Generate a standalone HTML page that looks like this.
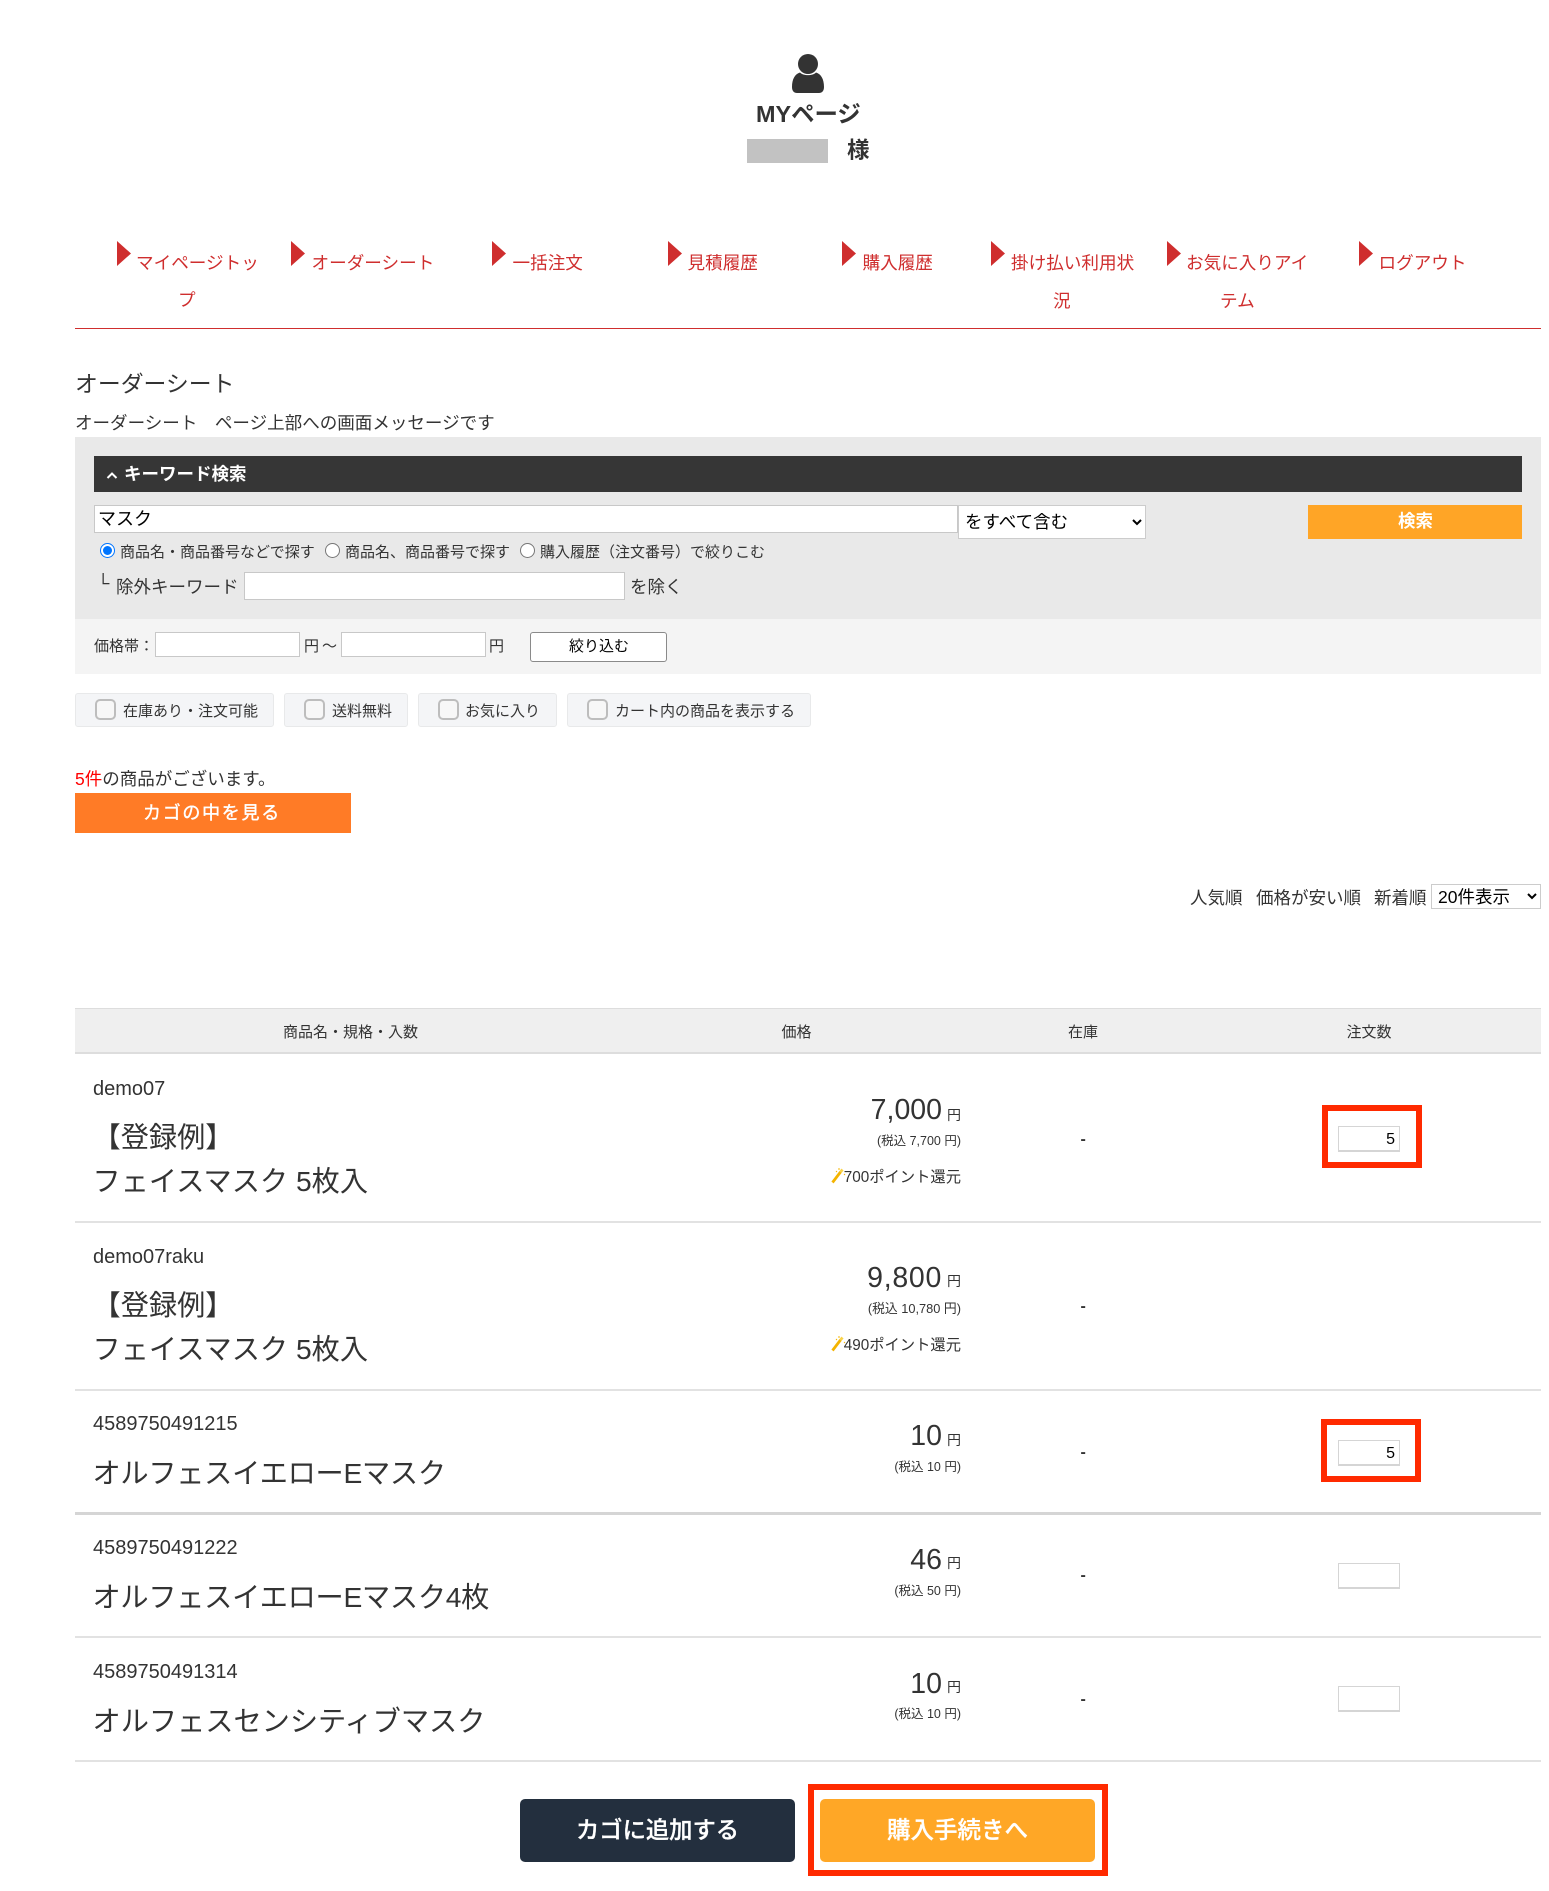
<!DOCTYPE html>
<html lang="ja"><head><meta charset="utf-8"><title>オーダーシート</title>
<style>
html,body{margin:0;padding:0;background:#fff}
body{position:relative;width:1549px;height:1891px;overflow:hidden;font-family:"Liberation Sans","Noto Sans CJK JP",sans-serif;color:#333}
.t{position:absolute;white-space:nowrap;line-height:1;font-size:17.5px}
.b{position:absolute;box-sizing:border-box}
.nav{color:#cf2e2e;font-size:17.6px}
.s15{font-size:15px}
input.i{position:absolute;box-sizing:border-box;background:#fff;border:1px solid #c8c8c8;margin:0;padding:0 4px;font-family:inherit;outline:0}
input.r{position:absolute;margin:0;width:15px;height:15px}
select{position:absolute;box-sizing:border-box;background:#fff;border:1px solid #ccc;border-radius:0;margin:0;font-family:inherit;font-size:17.5px;color:#000;padding:0 0 0 2px}
.pill{position:absolute;box-sizing:border-box;top:693px;height:34px;background:#f4f5f7;border:1px solid #e8e9ea;border-radius:3px}
.cb{position:absolute;box-sizing:border-box;top:699px;width:21px;height:21px;background:#f7f7f7;border:2px solid #bdbdbd;border-radius:5px}
.line{position:absolute;left:75px;width:1466px;height:2px;background:#e2e2e2}
.name{font-size:28.2px;left:92.500px}
.code{font-size:20px;left:93px}
.price{font-size:28.5px;right:607px}
.yen{font-size:14px;right:588px}
.tax{font-size:12.5px;right:588px}
.pt{font-size:15.3px;right:588px}
.dash{left:1080.500px;font-size:16px;font-weight:700}
.qty{position:absolute;box-sizing:border-box;left:1338px;width:62px;height:26px;background:#fff;border:1px solid #d5d5d5;border-bottom-width:2px;text-align:right;padding:3px 4px 0;margin:0;font:16px "Liberation Sans",sans-serif;color:#000}
.red{position:absolute;box-sizing:border-box;border:6px solid #ff2a00}
</style></head><body>

<svg class="b" style="left:790px;top:52px" width="36" height="43" viewBox="790 52 36 43"><circle cx="808" cy="64" r="10" fill="#333"/><path d="M800 72.500C803 76 813 76 816 72.500C821 74 824 79 824 87C824 91 822 93 819 93L797 93C794 93 792 91 792 87C792 79 795 74 800 72.500Z" fill="#333"/></svg>
<div class="t" style="left:756px;top:103px;font-size:23.400px;font-weight:700">MYページ</div>
<div class="b" style="left:747px;top:139px;width:81px;height:24px;background:#c2c2c2"></div>
<div class="t" style="left:847px;top:140px;font-size:22.500px;font-weight:700">様</div>

<svg class="b" style="left:116px;top:241px" width="17" height="26"><polygon points="1,0 15,12.500 1,25" fill="#cf2e2e"/></svg>
<svg class="b" style="left:290px;top:241px" width="17" height="26"><polygon points="1,0 15,12.500 1,25" fill="#cf2e2e"/></svg>
<svg class="b" style="left:491px;top:241px" width="17" height="26"><polygon points="1,0 15,12.500 1,25" fill="#cf2e2e"/></svg>
<svg class="b" style="left:666.500px;top:241px" width="17" height="26"><polygon points="1,0 15,12.500 1,25" fill="#cf2e2e"/></svg>
<svg class="b" style="left:841px;top:241px" width="17" height="26"><polygon points="1,0 15,12.500 1,25" fill="#cf2e2e"/></svg>
<svg class="b" style="left:990px;top:241px" width="17" height="26"><polygon points="1,0 15,12.500 1,25" fill="#cf2e2e"/></svg>
<svg class="b" style="left:1165.500px;top:241px" width="17" height="26"><polygon points="1,0 15,12.500 1,25" fill="#cf2e2e"/></svg>
<svg class="b" style="left:1358px;top:241px" width="17" height="26"><polygon points="1,0 15,12.500 1,25" fill="#cf2e2e"/></svg>
<div class="t nav" style="left:136px;top:255px">マイページトッ</div>
<div class="t nav" style="left:178px;top:292px">プ</div>
<div class="t nav" style="left:311.500px;top:255px">オーダーシート</div>
<div class="t nav" style="left:512.500px;top:255px">一括注文</div>
<div class="t nav" style="left:687.500px;top:255px">見積履歴</div>
<div class="t nav" style="left:862.500px;top:255px">購入履歴</div>
<div class="t nav" style="left:1011px;top:255px">掛け払い利用状</div>
<div class="t nav" style="left:1053px;top:293px">況</div>
<div class="t nav" style="left:1186px;top:255px">お気に入りアイ</div>
<div class="t nav" style="left:1220px;top:293px">テム</div>
<div class="t nav" style="left:1378.500px;top:255px">ログアウト</div>
<div class="b" style="left:75px;top:328px;width:1466px;height:1px;background:#cf2e2e"></div>

<div class="t" style="left:75px;top:373px;font-size:22.850px">オーダーシート</div>
<div class="t" style="left:75px;top:415px;font-size:17.550px">オーダーシート　ページ上部への画面メッセージです</div>

<div class="b" style="left:75px;top:437px;width:1466px;height:182px;background:#e9e9e9"></div>
<div class="b" style="left:75px;top:619px;width:1466px;height:55px;background:#f4f4f4"></div>
<div class="b" style="left:94px;top:456px;width:1428px;height:36px;background:#363636"></div>
<svg class="b" style="left:106px;top:471px" width="12" height="9"><path d="M1.500 7L6 2.500L10.500 7" fill="none" stroke="#fff" stroke-width="2"/></svg>
<div class="t" style="left:124px;top:466px;color:#fff;font-weight:700;font-size:17.500px">キーワード検索</div>

<input class="i" style="left:94px;top:505px;width:864px;height:28px;font-size:18px;color:#000;padding:0 0 3px 3px" value="マスク">
<select style="left:958px;top:505px;width:188px;height:34px"><option>をすべて含む</option></select>
<div class="b" style="left:1308px;top:505px;width:214px;height:34px;background:#ffa526"></div>
<div class="t" style="left:1398px;top:513px;color:#fff;font-weight:700">検索</div>

<input class="r" type="radio" name="k" checked style="left:100px;top:543px">
<div class="t s15" style="left:120px;top:545px">商品名・商品番号などで探す</div>
<input class="r" type="radio" name="k" style="left:325px;top:543px">
<div class="t s15" style="left:345px;top:545px">商品名、商品番号で探す</div>
<input class="r" type="radio" name="k" style="left:520px;top:543px">
<div class="t s15" style="left:540px;top:545px">購入履歴（注文番号）で絞りこむ</div>
<div class="t" style="left:97px;top:575px">└</div>
<div class="t" style="left:116px;top:579px">除外キーワード</div>
<input class="i" style="left:243.500px;top:572px;width:381px;height:28px">
<div class="t" style="left:630px;top:579px">を除く</div>

<div class="t s15" style="left:94px;top:639px">価格帯：</div>
<input class="i" style="left:154.500px;top:632px;width:145px;height:25px">
<div class="t s15" style="left:304px;top:639px">円</div>
<div class="t s15" style="left:322px;top:639px">～</div>
<input class="i" style="left:341px;top:632px;width:145px;height:25px">
<div class="t s15" style="left:489px;top:639px">円</div>
<div class="b" style="left:530px;top:632px;width:137px;height:30px;background:#fff;border:1px solid #8a8a8a;border-radius:3px"></div>
<div class="t s15" style="left:569px;top:639px;color:#000">絞り込む</div>

<div class="pill" style="left:75px;width:199px"></div>
<div class="pill" style="left:284px;width:124px"></div>
<div class="pill" style="left:418px;width:139px"></div>
<div class="pill" style="left:567px;width:244px"></div>
<div class="cb" style="left:95px"></div><div class="t s15" style="left:123px;top:704px">在庫あり・注文可能</div>
<div class="cb" style="left:304px"></div><div class="t s15" style="left:332px;top:704px">送料無料</div>
<div class="cb" style="left:438px"></div><div class="t s15" style="left:465px;top:704px">お気に入り</div>
<div class="cb" style="left:587px"></div><div class="t s15" style="left:615px;top:704px">カート内の商品を表示する</div>

<div class="t" style="left:75px;top:771px"><span style="color:#f00">5件</span>の商品がございます。</div>
<div class="b" style="left:75px;top:793px;width:276px;height:40px;background:#ff7b26"></div>
<div class="t" style="left:143px;top:804px;color:#fff;font-size:18px;letter-spacing:1.700px;-webkit-text-stroke:.4px #fff">カゴの中を見る</div>

<div class="t" style="left:1190px;top:889.500px">人気順</div>
<div class="t" style="left:1256px;top:889.500px">価格が安い順</div>
<div class="t" style="left:1374px;top:889.500px">新着順</div>
<select style="left:1431px;top:884px;width:110px;height:25px"><option>20件表示</option></select>

<div class="b" style="left:75px;top:1008px;width:1466px;height:46px;background:#efefef;border-top:1px solid #ddd;border-bottom:2px solid #ddd"></div>
<div class="t s15" style="left:283px;top:1024.500px">商品名・規格・入数</div>
<div class="t s15" style="left:781.500px;top:1024.500px">価格</div>
<div class="t s15" style="left:1068px;top:1024.500px">在庫</div>
<div class="t s15" style="left:1346.500px;top:1024.500px">注文数</div>

<div class="t code" style="top:1079px">demo07</div>
<div class="t name" style="top:1123px">【登録例】</div>
<div class="t name" style="top:1167px">フェイスマスク 5枚入</div>
<div class="t price" style="top:1096px">7,000</div><div class="t yen" style="top:1108px">円</div>
<div class="t tax" style="top:1135px">(税込 7,700 円)</div>
<svg class="b" style="left:830px;top:1167px" width="16" height="17"><path d="M2.500 15.500L10.500 5" stroke="#f4b400" stroke-width="2.800"/><path d="M10.500 5L12.500 2.500" stroke="#f9d34a" stroke-width="2.800"/><path d="M6 4l1 1M9 1v2M14 7l1 1" stroke="#f4b400" stroke-width="1"/></svg>
<div class="t pt" style="top:1170px">700ポイント還元</div>
<div class="t dash" style="top:1132px">-</div>
<div class="red" style="left:1322px;top:1105px;width:100px;height:63px"></div>
<input class="qty" style="top:1126px" value="5">
<div class="line" style="top:1221px"></div>

<div class="t code" style="top:1247px">demo07raku</div>
<div class="t name" style="top:1291px">【登録例】</div>
<div class="t name" style="top:1335px">フェイスマスク 5枚入</div>
<div class="t price" style="top:1264px;letter-spacing:.7px">9,800</div><div class="t yen" style="top:1274px">円</div>
<div class="t tax" style="top:1303px;font-size:12.800px">(税込 10,780 円)</div>
<svg class="b" style="left:830px;top:1335px" width="16" height="17"><path d="M2.500 15.500L10.500 5" stroke="#f4b400" stroke-width="2.800"/><path d="M10.500 5L12.500 2.500" stroke="#f9d34a" stroke-width="2.800"/><path d="M6 4l1 1M9 1v2M14 7l1 1" stroke="#f4b400" stroke-width="1"/></svg>
<div class="t pt" style="top:1338px">490ポイント還元</div>
<div class="t dash" style="top:1299px">-</div>
<div class="line" style="top:1389px"></div>

<div class="t code" style="top:1414px">4589750491215</div>
<div class="t name" style="top:1459px;letter-spacing:-.27px">オルフェスイエローEマスク</div>
<div class="t price" style="top:1421.500px">10</div><div class="t yen" style="top:1432.500px">円</div>
<div class="t tax" style="top:1460.500px">(税込 10 円)</div>
<div class="t dash" style="top:1445px">-</div>
<div class="red" style="left:1321px;top:1419px;width:100px;height:63px"></div>
<input class="qty" style="top:1440px" value="5">
<div class="line" style="top:1512px;height:3px;background:#d5d5d5"></div>

<div class="t code" style="top:1538px">4589750491222</div>
<div class="t name" style="top:1583px;letter-spacing:-.27px">オルフェスイエローEマスク4枚</div>
<div class="t price" style="top:1546px">46</div><div class="t yen" style="top:1556px">円</div>
<div class="t tax" style="top:1584.500px">(税込 50 円)</div>
<div class="t dash" style="top:1568px">-</div>
<input class="qty" style="top:1563px" value="">
<div class="line" style="top:1636px"></div>

<div class="t code" style="top:1662px">4589750491314</div>
<div class="t name" style="top:1707px">オルフェスセンシティブマスク</div>
<div class="t price" style="top:1669.500px">10</div><div class="t yen" style="top:1680px">円</div>
<div class="t tax" style="top:1707.500px">(税込 10 円)</div>
<div class="t dash" style="top:1692px">-</div>
<input class="qty" style="top:1686px" value="">
<div class="line" style="top:1760px"></div>

<div class="b" style="left:520px;top:1799px;width:275px;height:63px;background:#232f3e;border-radius:5px"></div>
<div class="t" style="left:576px;top:1819px;color:#fff;font-size:23.300px;font-weight:500;-webkit-text-stroke:.3px #fff">カゴに追加する</div>
<div class="red" style="left:808px;top:1784px;width:300px;height:92px"></div>
<div class="b" style="left:820px;top:1799px;width:275px;height:63px;background:#ffa726;border-radius:5px"></div>
<div class="t" style="left:887px;top:1819px;color:#fff;font-size:23.500px;font-weight:500;-webkit-text-stroke:.3px #fff">購入手続きへ</div>
</body></html>
